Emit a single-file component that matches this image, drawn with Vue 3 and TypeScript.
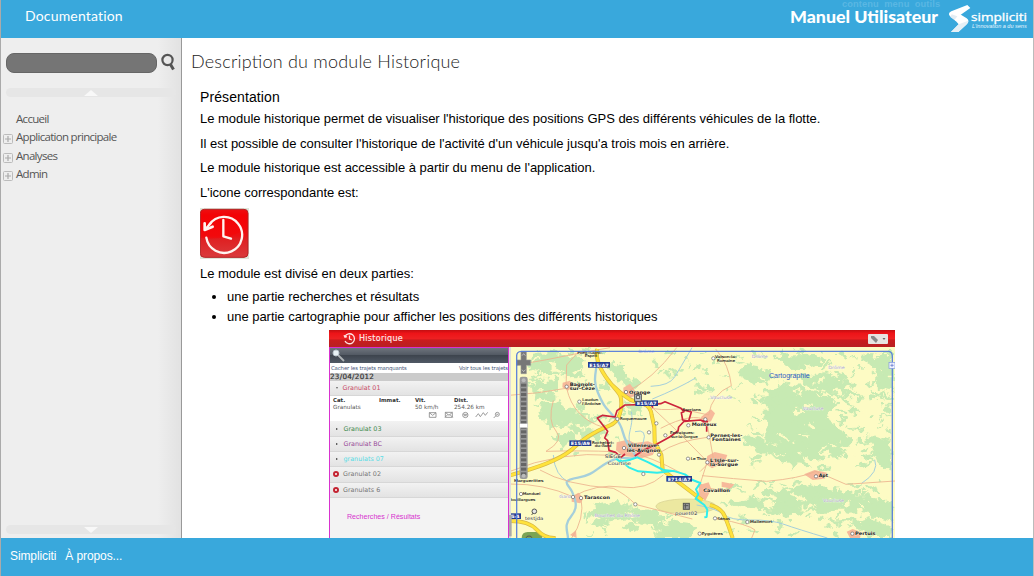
<script setup lang="ts">
interface MapLabel { text: string; x: number; y: number; w: number; kind?: string }
interface Town { x: number; y: number }

const menu = [
  { label: 'Accueil', open: false },
  { label: 'Application principale', open: true },
  { label: 'Analyses', open: true },
  { label: 'Admin', open: true },
]

const vehicles = [
  { name: 'Granulat 03', tone: 'green', off: false },
  { name: 'Granulat BC', tone: 'purple', off: false },
  { name: 'granulats 07', tone: 'cyan', off: false },
  { name: 'Granulat 02', tone: 'grey', off: true },
  { name: 'Granulats 6', tone: 'grey', off: true },
]

const labels: MapLabel[] = [
  { text: 'Pont-Saint-', x: 202, y: 86, w: 75, kind: 'small' },
  { text: 'Esprit', x: 224, y: 96, w: 38, kind: 'small' },
  { text: 'Bagnols-', x: 179, y: 183, w: 76 },
  { text: 'sur-Cèze', x: 179, y: 196, w: 76 },
  { text: 'Laudun', x: 217, y: 229, w: 48, kind: 'small' },
  { text: "l'Ardoise", x: 216, y: 240, w: 56, kind: 'small' },
  { text: 'Orange', x: 357, y: 206, w: 64 },
  { text: 'Roquemaure', x: 330, y: 285, w: 80, kind: 'small' },
  { text: 'Sarrians', x: 517, y: 257, w: 56, kind: 'small' },
  { text: 'Monteux', x: 545, y: 304, w: 75 },
  { text: 'Entraigues-', x: 480, y: 328, w: 73, kind: 'small' },
  { text: 'sur-la-Sorgue', x: 483, y: 338, w: 80, kind: 'small' },
  { text: 'Rochefort-', x: 246, y: 356, w: 66, kind: 'small' },
  { text: 'du-Gard', x: 254, y: 367, w: 50, kind: 'small' },
  { text: 'Villeneuve-', x: 354, y: 366, w: 93 },
  { text: 'lès-Avignon', x: 350, y: 380, w: 101 },
  { text: 'SIEGE', x: 284, y: 399, w: 49, kind: 'place' },
  { text: 'Courtine', x: 293, y: 421, w: 70, kind: 'place' },
  { text: 'Le Thor', x: 542, y: 405, w: 47, kind: 'small' },
  { text: 'Marguerittes', x: 12, y: 471, w: 88, kind: 'small' },
  { text: 'Manduel', x: 38, y: 510, w: 53, kind: 'small' },
  { text: 'Bouillargues', x: -3, y: 528, w: 79, kind: 'small' },
  { text: 'Tarascon', x: 222, y: 523, w: 78 },
  { text: 'testjda', x: 45, y: 584, w: 55, kind: 'place' },
  { text: 'pouet02', x: 495, y: 570, w: 67, kind: 'place' },
  { text: 'Cavaillon', x: 580, y: 501, w: 80 },
  { text: 'Sénas', x: 622, y: 585, w: 38, kind: 'small' },
  { text: 'Eyguières', x: 575, y: 629, w: 63, kind: 'small' },
  { text: 'Mallemort', x: 720, y: 595, w: 67, kind: 'small' },
  { text: 'Pertuis', x: 1035, y: 630, w: 62 },
  { text: 'Apt', x: 926, y: 457, w: 28 },
  { text: 'Vaison-la-', x: 615, y: 100, w: 65, kind: 'small' },
  { text: 'Romaine', x: 621, y: 110, w: 54, kind: 'small' },
  { text: 'Pernes-les-', x: 601, y: 335, w: 96 },
  { text: 'Fontaines', x: 606, y: 349, w: 87 },
  { text: "L'Isle-sur-", x: 600, y: 410, w: 86 },
  { text: 'la-Sorgue', x: 600, y: 424, w: 84 },
  { text: 'Drôme', x: 725, y: 99, w: 48, kind: 'region' },
  { text: 'Drôme', x: 955, y: 131, w: 49, kind: 'region' },
  { text: 'Drôme', x: 385, y: 83, w: 48, kind: 'region' },
  { text: 'Vaucluse', x: 601, y: 223, w: 65, kind: 'region' },
  { text: 'Vaucluse', x: 878, y: 254, w: 63, kind: 'region' },
  { text: 'Vaucluse', x: 939, y: 530, w: 63, kind: 'region' },
  { text: 'Gard', x: 148, y: 518, w: 34, kind: 'region' },
  { text: 'Bouches du Rhône', x: 254, y: 575, w: 136, kind: 'region' },
]

const shields = [
  { text: 'E15/A7', x: 234, y: 111, w: 66 },
  { text: 'E15/A9', x: 178, y: 346, w: 66 },
  { text: 'E714/A7', x: 469, y: 453, w: 77 },
  { text: 'E15/A7', x: 376, y: 226, w: 68 },
  { text: '54', x: -3, y: 565, w: 36 },
]

const towns: Town[] = [
  { x: 170, y: 185 }, { x: 208, y: 230 }, { x: 348, y: 201 }, { x: 322, y: 282 },
  { x: 342, y: 369 }, { x: 466, y: 331 }, { x: 535, y: 301 }, { x: 534, y: 401 },
  { x: 400, y: 447 }, { x: 189, y: 516 }, { x: 213, y: 519 }, { x: 376, y: 538 },
  { x: 33, y: 507 }, { x: 569, y: 626 }, { x: 615, y: 580 }, { x: 712, y: 591 },
  { x: 1027, y: 626 }, { x: 918, y: 454 }, { x: 610, y: 100 }, { x: 596, y: 337 },
  { x: 592, y: 412 }, { x: 417, y: 322 }, { x: 439, y: 295 }, { x: 447, y: 389 }, { x: 586, y: 283 },
]

// Wooded areas: broad masses first, then scattered copses and clearings.
const woods = [
  '60,86 130,80 170,95 200,88 232,130 214,160 150,150 96,150 55,130',
  '280,110 350,118 344,150 390,178 372,190 330,168 290,125',
  '70,168 150,172 140,215 110,230 60,210',
  '95,240 150,232 180,255 240,260 250,290 205,330 160,300 120,310 90,280',
  '120,330 190,320 200,350 150,370',
  '210,310 270,320 260,345 225,350',
  '340,225 380,240 400,270 365,260',
  '240,545 300,532 380,548 450,556 470,590 410,600 350,582 300,592 270,610 230,590',
  '440,600 490,590 560,600 545,639 450,639',
  '770,190 840,180 930,196 975,235 950,285 1030,340 985,395 920,405 840,390 790,380 765,340 770,270',
  '680,110 750,120 800,160 760,180 700,160',
  '790,90 900,86 950,110 905,130 830,128',
  '830,150 940,145 1020,170 1050,210 1000,220 910,185',
  '1060,86 1146,80 1150,200 1105,190 1080,130',
  '720,330 790,355 870,390 900,425 810,410 750,380 700,350',
  '790,495 900,480 990,490 1090,520 1147,530 1147,590 1070,570 1000,560 910,560 860,545 800,530',
  '650,530 730,515 820,530 890,555 830,575 700,550',
  '930,585 1080,580 1145,605 1140,639 1080,639 1040,600',
  '1070,330 1140,350 1144,440 1110,420',
]

function scatter(seed: number, zones: number[][]) {
  const rnd = () => {
    seed = (seed * 16807) % 2147483647
    return seed / 2147483647
  }
  return zones.flatMap(([x, y, w, h, n]) => Array.from({ length: n }, () => ({
    x: x + rnd() * w, y: y + rnd() * h, rx: 4 + rnd() * 16, ry: 2 + rnd() * 6,
    turn: -30 + rnd() * 70,
  })))
}

const copses = scatter(73, [
  [550, 74, 590, 150, 58], [720, 200, 420, 225, 100], [640, 470, 510, 165, 90],
  [60, 75, 240, 220, 32], [180, 260, 180, 130, 12], [220, 530, 300, 105, 26], [430, 76, 120, 120, 8],
])
const clearings = scatter(411, [
  [860, 190, 200, 210, 26], [680, 90, 460, 120, 34], [680, 490, 460, 140, 46],
  [60, 80, 190, 250, 28], [240, 540, 300, 90, 12], [720, 330, 160, 80, 8],
])

const motorways = 'M262 72C253 110 282 151 306 180S335 210 334 240 320 293 300 301 225 333 185 374C145 407 80 428 -3 452M306 180Q330 205 362 225L402 237Q422 245 425 270L433 306 434 350 454 390 458 435 515 479 577 526M600 540Q634 548 645 575T668 639M-3 588Q56 587 80 614T137 639'

const zoomSteps = Array.from({ length: 20 }, (_, i) => 176 + i * 14)
</script>

<template>
  <div class="page">
    <header class="top">
      <span class="doc">Documentation</span>
      <div class="brand">
        <div class="skip">contenu&nbsp; menu&nbsp; outils</div>
        <svg class="manual" width="150" height="24" viewBox="0 0 150 24"><text x="0" y="17" textLength="148" lengthAdjust="spacingAndGlyphs">Manuel Utilisateur</text></svg>
        <svg class="logo" width="80" height="30" viewBox="0 0 240 90">
          <path d="M58 3 10 22Q-2 28 6 37L22 49 40 41 34 35 67 12Z" fill="#fff" />
          <path d="M11 31 40 41 24 52 7 39Z" fill="#e3edf4" />
          <path d="M34 29 56 43Q66 51 57 60L31 84H9L32 61 20 47Z" fill="#fff" />
          <path d="M32 61 61 50Q61 56 54 63L31 84H9Z" fill="#e5eff5" />
          <text x="69" y="50" textLength="168" lengthAdjust="spacingAndGlyphs" class="logo-name">simpliciti</text>
          <text x="72" y="71" textLength="164" lengthAdjust="spacingAndGlyphs" class="logo-tag">L'innovation a du sens</text>
        </svg>
      </div>
    </header>

    <div class="body">
      <aside class="side">
        <div class="search">
          <div class="field"></div>
          <svg width="16" height="18" viewBox="0 0 16 18" fill="none" stroke="#555">
            <circle cx="6.5" cy="7" r="5.1" stroke-width="2.2" />
            <path d="M9.5 11.5 12.5 16.5" stroke-width="3" />
          </svg>
        </div>
        <div class="scroller up"><i></i></div>
        <nav>
          <div v-for="m in menu" :key="m.label" class="item">
            <svg v-if="m.open" width="10" height="10" viewBox="0 0 10 10" fill="none"><rect x=".5" y=".5" width="9" height="9" rx="1" stroke="#bbb" /><path d="M2 5h6M5 2v6" stroke="#aaa" stroke-width="1.2" /></svg>
            <span>{{ m.label }}</span>
          </div>
        </nav>
        <div class="scroller down"><i></i></div>
      </aside>

      <main class="content">
        <h1><svg width="272" height="26" viewBox="0 0 272 26"><text x="0" y="18" textLength="269" lengthAdjust="spacing">Description du module Historique</text></svg></h1>
        <h2>Présentation</h2>
        <p>Le module historique permet de visualiser l'historique des positions GPS des différents véhicules de la flotte.</p>
        <p>Il est possible de consulter l'historique de l'activité d'un véhicule jusqu'a trois mois en arrière.</p>
        <p>Le module historique est accessible à partir du menu de l'application.</p>
        <p>L'icone correspondante est:</p>
        <svg class="clock" width="49" height="51" viewBox="0 0 147 153">
          <defs><linearGradient id="red" x1="0" y1="0" x2="0" y2="1"><stop offset="0" stop-color="#e51b1d" /><stop offset=".12" stop-color="#ee0508" /><stop offset=".55" stop-color="#ed1013" /><stop offset=".62" stop-color="#df2022" /><stop offset="1" stop-color="#da3b3c" /></linearGradient></defs>
          <rect width="147" height="153" fill="#dfe5da" />
          <rect x="1" y="4" width="143" height="144" rx="12" fill="url(#red)" stroke="#b42224" stroke-width="3" />
          <path d="M3 89Q70 100 142 62V17Q141 6 130 6H14Q3 6 3 17Z" fill="#fa0003" opacity=".4" />
          <g fill="none" stroke="#fff4f0" stroke-width="7" stroke-linecap="round" stroke-linejoin="round">
            <path d="M28 50A54 54 0 1 1 19 89" /><path d="M70 36V85L93 92" /><path d="M14 46V66L38 56" stroke-width="8" /><path d="M16 64 32 46" />
          </g>
        </svg>
        <p class="after">Le module est divisé en deux parties:</p>
        <ul>
          <li>une partie recherches et résultats</li>
          <li>une partie cartographie pour afficher les positions des différents historiques</li>
        </ul>

        <section class="shot">
          <div class="redbar">
            <svg width="13" height="13" viewBox="0 0 13 13" fill="none" stroke="#ffe5e5" stroke-width="1.3"><path d="M2 4.5A5 5 0 1 1 2 9M1 3.3 2 5.3 4 4.7M6.5 3.5V7L9 8" /></svg>
            <b>Historique</b>
            <div class="tool"><svg width="19" height="9" viewBox="0 0 19 9"><path d="M3 2h3l4 4-2 3-5-5Z" fill="#888" /><path d="M14.5 4h3L16 6Z" fill="#666" /></svg></div>
          </div>
          <div class="split">
            <div class="panel">
              <div class="dark"><svg width="14" height="14" viewBox="0 0 14 14"><path d="M5.5 5.5 12 12" stroke="#aeb3b6" stroke-width="1.8" /><circle cx="4" cy="4" r="3" fill="#e8f1f5" stroke="#b9c5cc" /></svg></div>
              <div class="links"><span>Cacher les trajets manquants</span><span>Voir tous les trajets</span></div>
              <div class="date">23/04/2012</div>
              <div class="row first"><i class="tri down"></i><span class="rose">Granulat 01</span></div>
              <div class="detail">
                <div class="cols"><div><b>Cat.</b><br />Granulats</div><div><b>Immat.</b></div><div><b>Vit.</b><br />50 km/h</div><div><b>Dist.</b><br />254.26 km</div></div>
                <svg width="74" height="8" viewBox="0 0 222 24" fill="none" stroke="#888" stroke-width="2.5">
                  <path d="M4 5h20v14H4ZM4 5l10 8 10-8M52 4h21v15H52ZM52 4l11 9 10-9M51 19l9-9M74 19l-9-9" />
                  <circle cx="112" cy="12" r="8" /><path d="M106 10h12M108 14h8M143 18l8-10 6 9 9-12 6 8 7-9" /><circle cx="208" cy="10" r="6" /><path d="m204 14-7 7M205 10h6" />
                </svg>
              </div>
              <div v-for="v in vehicles" :key="v.name" class="row"><i :class="v.off ? 'off' : 'tri'"></i><span :class="v.tone">{{ v.name }}</span></div>
              <div class="caption">Recherches / Résultats</div>
            </div>

            <svg class="map" width="386" height="191" viewBox="-3 66 1158 573" preserveAspectRatio="none">
              <defs>
                <filter id="rough" x="-5%" y="-5%" width="110%" height="110%"><feTurbulence type="fractalNoise" baseFrequency=".035" numOctaves="3" seed="8" /><feDisplacementMap in="SourceGraphic" scale="42" xChannelSelector="R" yChannelSelector="G" /></filter>
              </defs>
              <rect x="-3" y="66" width="1158" height="573" fill="#fdfbc4" />
              <g fill="#c7eab3" filter="url(#rough)">
                <polygon v-for="w in woods" :key="w" :points="w" />
                <ellipse v-for="(c, i) in clearings" :key="`k${i}`" :cx="c.x" :cy="c.y" :rx="c.rx" :ry="c.ry" :transform="`rotate(${c.turn} ${c.x} ${c.y})`" fill="#fdfbc4" />
                <ellipse v-for="(c, i) in copses" :key="i" :cx="c.x" :cy="c.y" :rx="c.rx" :ry="c.ry" :transform="`rotate(${c.turn} ${c.x} ${c.y})`" />
              </g>
              <ellipse cx="528" cy="544" rx="90" ry="22" fill="#ece8a0" stroke="#d5ce91" stroke-width="2" />
              <path d="M35 639q0-18 18-18h26q18 0 18 18Z" fill="#7ba454" />
              <g fill="#f7b99b">
                <path d="M158 173l22-6 8 16-14 14-17-10ZM340 188l20-12 12 16 10 20-28 6-14-15ZM320 352l32-8 22 10 40-5 30 13-16 28-34 10-56-8-20-16ZM573 276l30-23 12 12-12 24-26 8ZM592 393l22-12 38 9-8 22-38 18-20-14ZM568 480l28-8 8 20-18 35-22-16ZM185 515l20-12 16 16-10 16-26-5ZM882 448l32-13 36 8-6 18-36 4ZM1010 620l18-8 26 10-4 17h-30ZM180 630l18-14 2 23ZM635 470l38 8-10 12-28-4Z" />
              </g>
              <g class="river">
                <path d="M258 72C270 130 242 150 263 201S290 248 320 285C345 310 331 333 365 375S346 391 320 401C260 421 262 448 204 458S177 478 186 500 207 546 184 573 172 614 174 639" stroke-width="7" />
                <path d="M364 260c10 48-25 80 7 104M375 320q38-10 25 31T376 395M546 68Q510 130 494 156T422 184M130 390q4 63 48 82M555 160q-50 30-128 62M1094 404q15 36-39 71M560 540q58 10 80 28t82 17 100 13 130 41" stroke-width="3" />
              </g>
              <g class="minor">
                <path d="M-3 211Q84 206 168 190M168 190 170 120 200 86 300 68M170 190Q190 280 281 307M130 226Q112 290 138 318T108 379Q230 376 306 380M-3 440Q150 377 310 391M0 477Q103 476 188 515Q260 475 334 486T460 450M213 519Q225 580 185 639M90 435Q166 480 310 490 350 510 376 538L547 582M350 201Q427 164 500 68M350 201Q390 266 510 251L596 270Q605 207 664 182 658 120 617 72M425 246Q507 320 592 410L567 488M452 310Q548 260 590 287L610 400 570 440M576 452Q668 461 770 469 870 460 918 439L1008 478 1155 468M600 490Q640 500 660 490M620 580Q720 600 735 615L725 639M448 384Q500 348 592 337M390 390Q462 411 576 480M20 120Q110 105 200 86" />
              </g>
              <g fill="none" stroke-linejoin="round">
                <path :d="motorways" stroke="#d9b944" stroke-width="12" />
                <path :d="motorways" stroke="#ffe33b" stroke-width="8" />
                <path d="M345 387 333 397 317 382 297 376 293 347 284 339 293 319 262 279 278 271 315 276 321 257 345 240 430 238 452 236 465 230 513 250 522 260 514 263 518 285 536 288 544 261 517 254M424 240 429 248M523 288 506 306 504 318 479 336 441 357 401 375 374 393M523 289 572 285 582 290 590 303 590 320M574 287 594 290" stroke="#cc243c" stroke-width="5" />
                <path d="M318 401 330 410 362 404 382 397 415 412 460 435 495 439 525 448 548 465 571 474 558 493 565 508 557 521 583 540 592 554 590 576 583 577M330 405 356 427 385 439 441 443 482 439" stroke="#30edec" stroke-width="6" />
              </g>
              <g v-for="s in shields" :key="s.x">
                <rect :x="s.x" :y="s.y" :width="s.w" height="17" fill="#233b91" />
                <text :x="s.x + 4" :y="s.y + 14" :textLength="s.w - 8" lengthAdjust="spacingAndGlyphs" class="shield">{{ s.text }}</text>
              </g>
              <circle v-for="t in towns" :key="`${t.x}-${t.y}`" :cx="t.x" :cy="t.y" r="5" fill="#fff" stroke="#666" stroke-width="2" />
              <text v-for="l in labels" :key="`${l.x}-${l.y}`" :x="l.x" :y="l.y" :textLength="l.w" lengthAdjust="spacingAndGlyphs" class="label" :class="l.kind">{{ l.text }}</text>
              <g fill="#e4e6e5" stroke="#555" stroke-width="3"><rect x="374" y="208" width="20" height="21" fill="#c4d2dc" /><path d="M379 212h10v9h-10Z" /><rect x="520" y="535" width="18" height="18" fill="#999" /><path d="M523 542h12M526 537v14" /><circle cx="73" cy="559" r="7" /><path d="m68 565-3 5" /><ellipse cx="57" cy="638" rx="8" ry="5" fill="none" /></g>
              <g>
                <path d="M33 80h16v25h13v16H49v25H33v-25H20v-16h13Z" fill="#777" stroke="#999" stroke-width="2" />
                <path d="m36 92 5-6 5 6M36 134l5 6 5-6" fill="none" stroke="#ddd" stroke-width="2" />
                <rect x="29" y="155" width="24" height="307" rx="7" fill="#999" />
                <rect v-for="y in zoomSteps" :key="y" x="33" :y="y" width="16" height="9" fill="#666" />
                <rect x="29" y="296" width="24" height="12" fill="#fff" stroke="#bbb" />
                <circle cx="41" cy="166" r="6" fill="#bbb" /><circle cx="41" cy="452" r="6" fill="#bbb" />
              </g>
              <path d="M20 639V92Q20 80 34 79H1134Q1147 79 1147 94V639" fill="none" stroke="#5078dc" stroke-width="4" opacity=".9" />
              <rect x="1137" y="112" width="18" height="18" fill="#f1f3ff" stroke="#7b94de" stroke-width="2" /><path d="M1141 121h10M1146 116v10" stroke="#526ac5" stroke-width="2" />
              <path d="M0 66V639" stroke="#ddd" stroke-width="6" />
              <rect x="-3" y="570" width="8" height="64" fill="#aaa" />
              <text x="777" y="159" textLength="122" lengthAdjust="spacingAndGlyphs" class="carto">Cartographie</text>
            </svg>
          </div>
        </section>
      </main>
    </div>
    <footer><span>Simpliciti</span><span>À propos...</span></footer>
  </div>
</template>

<style>
html, body { margin: 0; overflow: hidden; }
</style>
<style scoped>
* { box-sizing: border-box; }
.page { width: 1034px; height: 576px; border-left: 1px solid #aaa; border-right: 1px solid #bbb; display: flex; flex-direction: column; overflow: hidden; background: #fff; font-family: "Liberation Sans", Arial, sans-serif; }
svg { display: block; flex: none; }
.top { height: 38px; flex: none; background: #39a8dc; display: flex; justify-content: space-between; color: #fff; }
.doc { font: 400 14px/32px Lato, sans-serif; padding-left: 24px; letter-spacing: .17px; }
.brand { display: flex; position: relative; padding: 4px 5px 0 0; gap: 8px; }
.skip { position: absolute; left: 52px; top: 0; font-size: 9.3px; line-height: 8px; color: #5ab7e3; letter-spacing: .1px; font-weight: 700; white-space: nowrap; }
.manual { margin-top: 2px; }
.manual text { font: 900 16px Lato, sans-serif; fill: #fff; }
.logo-name { font: 400 33px "Open Sans", sans-serif; fill: #fff; stroke: #fff; stroke-width: 1px; }
.logo-tag { font: italic 400 15px "Liberation Sans", sans-serif; fill: #e7f6ff; }
.body { height: 500px; display: flex; }
.side { width: 181px; flex: none; background: linear-gradient(90deg, #eee 87%, #e2e2e2); border-right: 1px solid #999; display: flex; flex-direction: column; padding: 15px 5px 4px; }
.search { display: flex; height: 20px; gap: 4px; }
.field { width: 151px; flex: none; height: 20px; background: #757575; border: 1px solid #666; border-radius: 8px; }
.scroller { height: 9px; border-radius: 5px; background: #e6e6e6; display: flex; justify-content: center; align-items: center; flex: none; }
.scroller i { border: 7px solid transparent; border-top: 0; border-bottom: 6px solid #f8f8f8; }
.scroller.down i { border-bottom: 0; border-top: 6px solid #f8f8f8; }
.up { margin-top: 15px; }
.down { margin-top: auto; }
nav { padding-top: 13px; font: 11.5px/18.4px "Open Sans", sans-serif; letter-spacing: -.7px; color: #555; }
.item { height: 18.4px; padding-left: 10px; position: relative; }
.item svg { position: absolute; left: -3px; top: 6px; }
.content { flex: 1; overflow: hidden; padding: 12px 0 0 18px; color: #000; }
h1 { margin: 0 0 0 -9px; height: 38px; }
h1 text { font: 300 18px Lato, sans-serif; fill: #222; }
h2 { margin: 0; font: 400 14px/18px "Liberation Sans", sans-serif; height: 19px; letter-spacing: .1px; }
p { margin: 0; font-size: 13px; height: 24.7px; line-height: 24.7px; letter-spacing: -.024px; white-space: nowrap; }
.clock { margin-top: 2px; }
.after { margin-top: 3px; }
ul { margin: 1px 0 0; padding-left: 27px; font-size: 13px; line-height: 20px; letter-spacing: -.024px; }
.shot { width: 566px; height: 208px; margin: 3px 0 0 129px; overflow: hidden; font-family: "DejaVu Sans", sans-serif; }
.redbar { height: 17px; display: flex; align-items: center; padding: 0 7px 0 14px; gap: 3px; background: linear-gradient(#c30f12, #ee1418 20%, #ee2022 50%, #c91b1d 60%, #b72022); color: #ffe9e9; font-size: 8px; }
.redbar b { font-weight: 400; letter-spacing: .3px; -webkit-text-stroke: .15px; }
.tool { margin-left: auto; width: 20px; height: 10px; background: #e7e4e1; border-radius: 1px; }
.split { display: flex; }
.panel { width: 180px; height: 191px; border: solid #d832cf; border-width: 1px 1px 0; background: #f3f3f3; overflow: hidden; font-size: 6.3px; color: #555; }
.dark { height: 15px; background: linear-gradient(#6e747c, #535a64 45%, #3e454e 50%, #505965); padding: 1px 2px; }
.links { height: 10px; line-height: 10px; display: flex; justify-content: space-between; background: #fff; font-size: 5.4px; letter-spacing: -.14px; color: #475779; padding-left: 1px; white-space: nowrap; }
.date { height: 8px; line-height: 8px; background: #cbcbcb; font-size: 7.2px; letter-spacing: .28px; color: #333; -webkit-text-stroke: .2px; }
.row { height: 15.3px; background: linear-gradient(#f2f2f2, #e3e3e3); border-bottom: 1px solid #d7d7d7; display: flex; align-items: center; }
.row.first { height: 15px; }
.row span { font-size: 6.4px; }
.tri { width: 0; height: 0; border: 1.7px solid transparent; border-left: 2px solid #333; margin: 0 4.5px 0 6px; }
.tri.down { border: 1.7px solid transparent; border-top: 2px solid #666; }
.off { width: 6px; height: 6px; border-radius: 50%; background: #fff; border: 2px solid #c32331; margin: 0 4px 0 3px; }
.rose { color: #c94d68; } .green { color: #41894c; } .purple { color: #994c99; } .cyan { color: #56dce5; } .grey { color: #777; }
.detail { height: 25px; background: #fff; padding: 1px 0 0 3px; font-size: 5.7px; line-height: 6.6px; }
.cols { display: grid; grid-template-columns: 46px 36px 39px 55px; white-space: nowrap; }
.detail b { color: #333; font-size: 5.4px; }
.detail svg { margin: 0 0 0 95px; }
.caption { padding: 15px 0 0 17px; font: 7.1px/8px "Liberation Sans", sans-serif; color: #d734cf; }
.river { fill: none; stroke: #a5cfdb; }
.minor { fill: none; stroke: #ecb48e; stroke-width: 2.6px; }
.label { font: 700 14px "DejaVu Sans", sans-serif; fill: #222; paint-order: stroke; stroke: #fffce0; stroke-width: 1.5px; }
.label.small { font-size: 11px; font-weight: 400; stroke: #444; stroke-width: .4px; }
.label.place { font-size: 14px; font-weight: 400; fill: #333; }
.label.region { font-size: 13px; font-weight: 400; fill: #aaa5c2; stroke: #fff; stroke-width: 1px; }
.shield { font: 700 13px "DejaVu Sans", sans-serif; fill: #fff; }
.carto { font: 20px "Liberation Sans", sans-serif; fill: #315bc4; }
footer { height: 38px; flex: none; background: #39a8dc; color: #fff; padding: 0 9px; display: flex; gap: 9px; font-size: 12px; line-height: 36px; letter-spacing: -.1px; }
</style>
